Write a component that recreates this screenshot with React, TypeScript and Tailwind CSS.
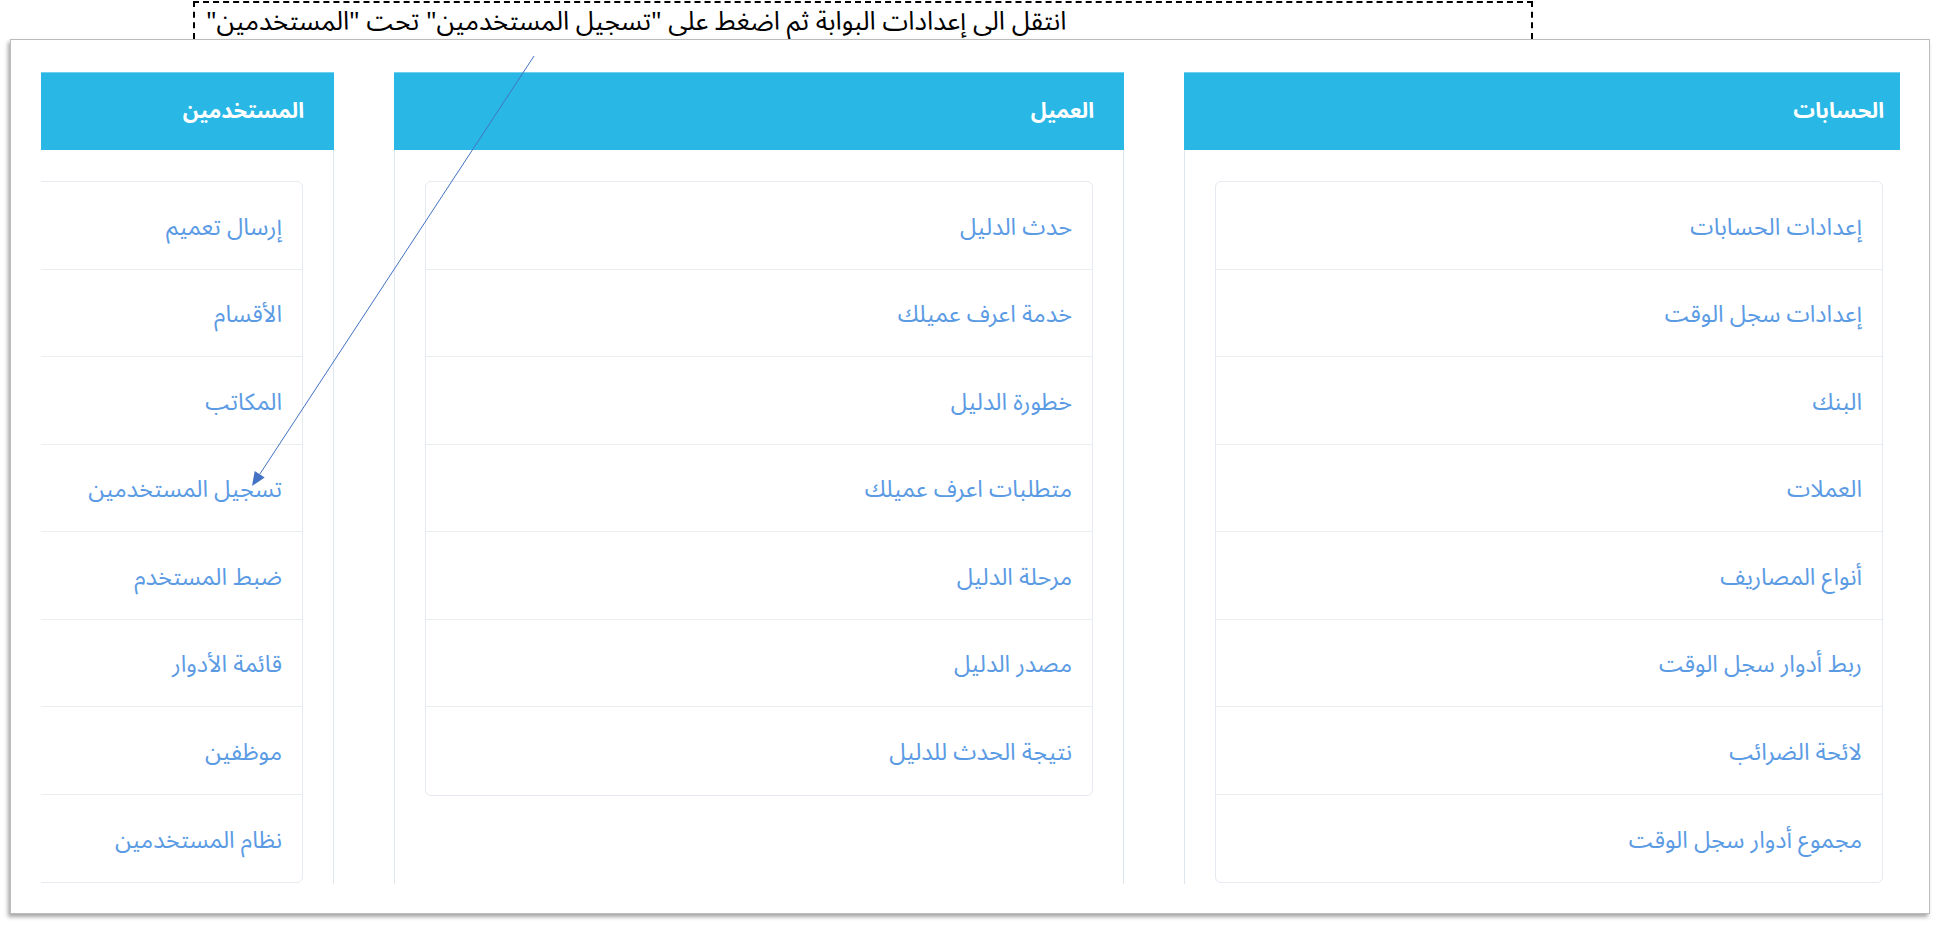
import React from "react";

const accounts = [
  "إعدادات الحسابات",
  "إعدادات سجل الوقت",
  "البنك",
  "العملات",
  "أنواع المصاريف",
  "ربط أدوار سجل الوقت",
  "لائحة الضرائب",
  "مجموع أدوار سجل الوقت",
];
const client = [
  "حدث الدليل",
  "خدمة اعرف عميلك",
  "خطورة الدليل",
  "متطلبات اعرف عميلك",
  "مرحلة الدليل",
  "مصدر الدليل",
  "نتيجة الحدث للدليل",
];
const users = [
  "إرسال تعميم",
  "الأقسام",
  "المكاتب",
  "تسجيل المستخدمين",
  "ضبط المستخدم",
  "قائمة الأدوار",
  "موظفين",
  "نظام المستخدمين",
];

function Panel({ title, items }: { title: string; items: string[] }) {
  return (
    <div className="w-[730px] shrink-0 flex flex-col h-full">
      <div className="h-[78px] bg-[#29b8e5] border-t border-[#6fd0ee] flex items-center pr-[30px] text-white text-[21.5px] font-bold">
        {title}
      </div>
      <div className="flex-1 border-x border-[#dfe7ee] pt-[31px] px-[30px]">
        <div className="border border-[#e4eaef] rounded-[6px]">
          {items.map((t, i) => (
            <div
              key={i}
              className={`h-[87.5px] flex items-center pr-[20px] pt-[4px] text-[23.5px] text-[#5b9be4] ${
                i < items.length - 1 ? "border-b border-[#e9eef3]" : ""
              }`}
            >
              {t}
            </div>
          ))}
        </div>
      </div>
    </div>
  );
}

export default function App() {
  return (
    <div
      className="relative w-[1941px] h-[926px] bg-white overflow-hidden"
      style={{ fontFamily: '"Noto Sans Arabic", "DejaVu Sans", sans-serif' }}
    >
      <div
        dir="rtl"
        className="absolute left-[193px] top-[1px] w-[1340px] h-[70px] border-2 border-dashed border-black text-left pl-[11px] pt-[2px] text-[26px] text-black leading-[34px]"
      >
        انتقل الى إعدادات البوابة ثم اضغط على "تسجيل المستخدمين" تحت "المستخدمين"
      </div>
      <div className="relative ml-[10px] mt-[39px] w-[1920px] h-[875px] bg-white border border-[#bcbcbc] shadow-[-2px_3px_4px_rgba(0,0,0,0.35)] pl-[30px] pt-[32px]">
        <div dir="rtl" className="w-[1859px] h-[812px] overflow-hidden">
          <div className="flex gap-[60px] mr-[-14px] h-full">
            <Panel title="الحسابات" items={accounts} />
            <Panel title="العميل" items={client} />
            <Panel title="المستخدمين" items={users} />
          </div>
        </div>
      </div>
      <svg className="absolute left-0 top-0 pointer-events-none" width="1941" height="926">
        <line x1="534" y1="56" x2="259.7" y2="474.3" stroke="#4472c4" strokeWidth="1" />
        <polygon points="252,486 264.7,477.6 254.7,471" fill="#4472c4" />
      </svg>
    </div>
  );
}
